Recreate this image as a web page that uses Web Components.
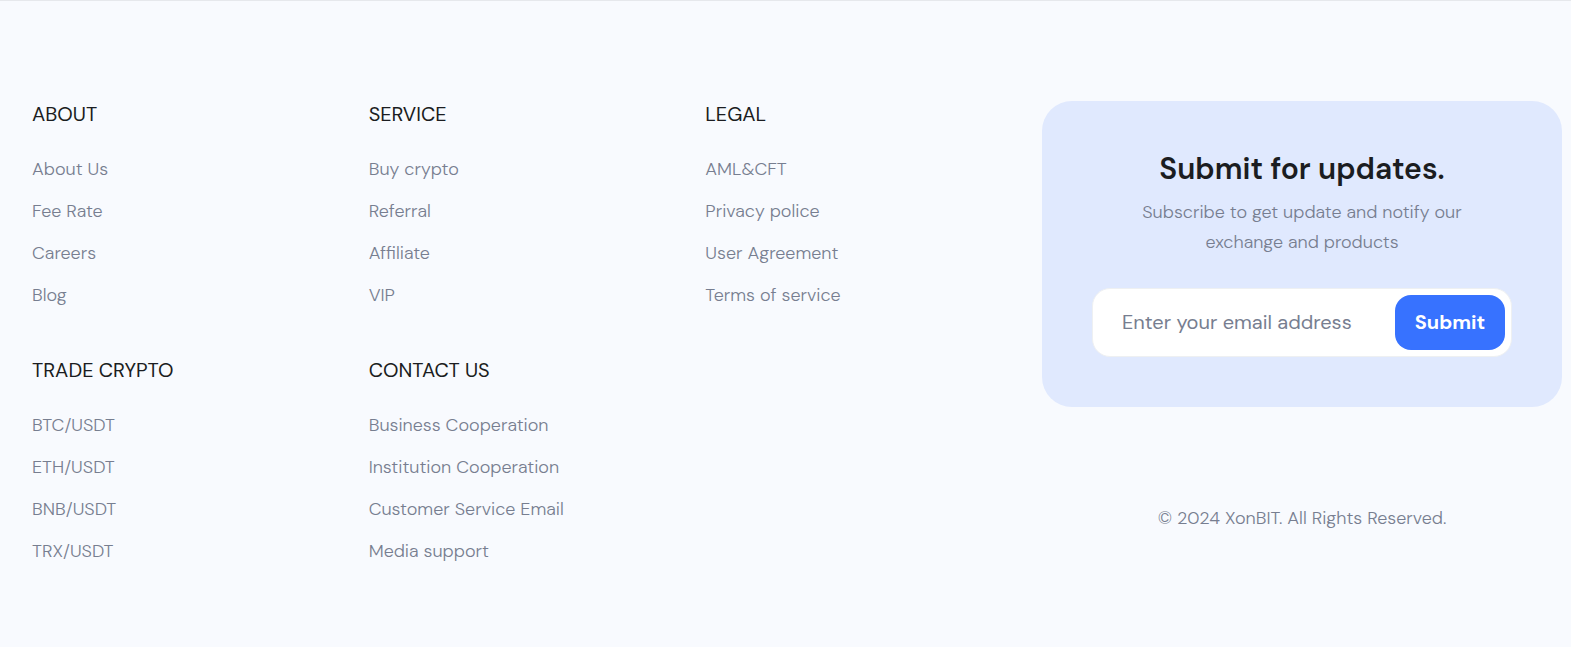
<!DOCTYPE html>
<html lang="en">
<head>
<meta charset="utf-8">
<title>XonBIT</title>
<style>
body { margin: 0; background: #f8fafe; color: #1b1d21; font-family: "DM Sans", "Open Sans", Inter, sans-serif; }
</style>
</head>
<body>
<site-footer>
  <link-group heading="ABOUT" items="About Us|Fee Rate|Careers|Blog"></link-group>
  <link-group heading="SERVICE" items="Buy crypto|Referral|Affiliate|VIP"></link-group>
  <link-group heading="LEGAL" items="AML&amp;CFT|Privacy police|User Agreement|Terms of service"></link-group>
  <link-group heading="TRADE CRYPTO" items="BTC/USDT|ETH/USDT|BNB/USDT|TRX/USDT"></link-group>
  <link-group heading="CONTACT US" items="Business Cooperation|Institution Cooperation|Customer Service Email|Media support"></link-group>
  <subscribe-card slot="aside"></subscribe-card>
  <copyright-note slot="aside">© 2024 XonBIT. All Rights Reserved.</copyright-note>
</site-footer>
<script>
class BaseElement extends HTMLElement {
  constructor() {
    super();
    this.attachShadow({ mode: "open" }).innerHTML = this.constructor.markup;
  }
}
class SiteFooter extends BaseElement {
  static markup = `
    <style>
      :host { display: block; border-top: 1px solid #e6e8ec; }
      footer { display: grid; grid-template-columns: minmax(0, 1fr) 520px; padding: 100px 9px 30px 32px; }
      nav { display: grid; grid-template-columns: repeat(3, minmax(0, 1fr)); align-content: start; }
      aside { display: flex; flex-direction: column; gap: 97px; }
    </style>
    <footer><nav><slot></slot></nav><aside><slot name="aside"></slot></aside></footer>`;
}
class LinkGroup extends BaseElement {
  static markup = `
    <style>
      :host { display: block; padding-bottom: 48px; }
      h2 { margin: 0 0 28px; font-size: 20px; line-height: 26px; font-weight: 400; }
      ul { list-style: none; margin: 0; padding: 0; display: grid; gap: 14px; }
      li { font-size: 18px; line-height: 28px; font-weight: 300; }
      a { color: #777e90; text-decoration: none; }
    </style>
    <h2></h2><ul></ul>`;
  connectedCallback() {
    this.shadowRoot.querySelector("h2").textContent = this.getAttribute("heading");
    const list = this.shadowRoot.querySelector("ul");
    list.replaceChildren(...this.getAttribute("items").split("|").map((text) => {
      const item = document.createElement("li");
      const link = document.createElement("a");
      link.href = "#";
      link.textContent = text;
      item.append(link);
      return item;
    }));
  }
}
class SubscribeCard extends BaseElement {
  static markup = `
    <style>
      :host { display: block; background: #e0e9fe; border-radius: 30px; padding: 50px; text-align: center; }
      h2 { margin: 0; font-size: 30px; line-height: 36px; font-weight: 600; }
      p { margin: 10px 40px 31px; font-size: 18px; line-height: 30px; font-weight: 300; color: #777e90; }
      form { display: flex; background: #fff; border: 1px solid #eef0f2; border-radius: 18px; padding: 6px; }
      input, button { border: 0; font: 20px "DM Sans", "Open Sans", sans-serif; }
      input { flex: 1; min-width: 0; outline: 0; background: none; padding: 0 23px 2px; }
      input::placeholder { color: #777e90; opacity: 1; }
      button { width: 110px; height: 55px; padding: 0 0 2px; border-radius: 16px; background: #3772ff; color: #fff; font-weight: 700; }
    </style>
    <h2>Submit for updates.</h2>
    <p>Subscribe to get update and notify our exchange and products</p>
    <form><input type="email" aria-label="Email address" placeholder="Enter your email address"><button type="button">Submit</button></form>`;
}
class CopyrightNote extends BaseElement {
  static markup = `
    <style>:host { display: block; text-align: center; color: #777e90; font-size: 18px; line-height: 28px; font-weight: 300; }</style>
    <slot></slot>`;
}
customElements.define("site-footer", SiteFooter);
customElements.define("link-group", LinkGroup);
customElements.define("subscribe-card", SubscribeCard);
customElements.define("copyright-note", CopyrightNote);
</script>
</body>
</html>
